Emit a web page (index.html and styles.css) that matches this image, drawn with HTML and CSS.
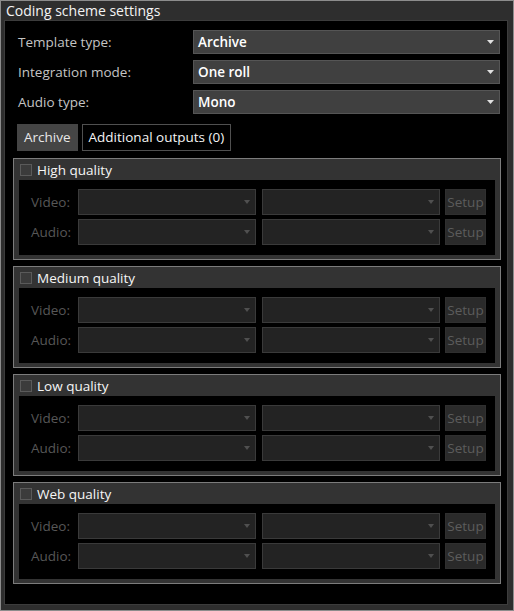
FILE: index.html
```html
<!DOCTYPE html>
<html>
<head>
<meta charset="utf-8">
<link rel="stylesheet" href="styles.css">
</head>
<body>
<div class="window">
  <div class="title">Coding scheme settings</div>
  <div class="panel">
    <div class="form">
      <div class="form-row">
        <span class="form-label">Template type:</span>
        <div class="combo"><span>Archive</span><svg class="arrow" width="7" height="4" viewBox="0 0 7 4"><path d="M0 0h7L3.5 4z"/></svg></div>
      </div>
      <div class="form-row">
        <span class="form-label">Integration mode:</span>
        <div class="combo"><span>One roll</span><svg class="arrow" width="7" height="4" viewBox="0 0 7 4"><path d="M0 0h7L3.5 4z"/></svg></div>
      </div>
      <div class="form-row">
        <span class="form-label">Audio type:</span>
        <div class="combo"><span>Mono</span><svg class="arrow" width="7" height="4" viewBox="0 0 7 4"><path d="M0 0h7L3.5 4z"/></svg></div>
      </div>
    </div>

    <div class="tabs">
      <div class="tab active">Archive</div>
      <div class="tab">Additional outputs (0)</div>
    </div>

    <div class="groups">
      <div class="group">
        <div class="group-head"><span class="check"></span><span>High quality</span></div>
        <div class="group-body">
          <div class="q-row"><span class="q-label">Video:</span><div class="dcombo"><svg class="darrow" width="6" height="4" viewBox="0 0 6 4"><path d="M0 0h6L3 4z"/></svg></div><div class="dcombo"><svg class="darrow" width="6" height="4" viewBox="0 0 6 4"><path d="M0 0h6L3 4z"/></svg></div><div class="setup">Setup</div></div>
          <div class="q-row"><span class="q-label">Audio:</span><div class="dcombo"><svg class="darrow" width="6" height="4" viewBox="0 0 6 4"><path d="M0 0h6L3 4z"/></svg></div><div class="dcombo"><svg class="darrow" width="6" height="4" viewBox="0 0 6 4"><path d="M0 0h6L3 4z"/></svg></div><div class="setup">Setup</div></div>
        </div>
      </div>
      <div class="group">
        <div class="group-head"><span class="check"></span><span>Medium quality</span></div>
        <div class="group-body">
          <div class="q-row"><span class="q-label">Video:</span><div class="dcombo"><svg class="darrow" width="6" height="4" viewBox="0 0 6 4"><path d="M0 0h6L3 4z"/></svg></div><div class="dcombo"><svg class="darrow" width="6" height="4" viewBox="0 0 6 4"><path d="M0 0h6L3 4z"/></svg></div><div class="setup">Setup</div></div>
          <div class="q-row"><span class="q-label">Audio:</span><div class="dcombo"><svg class="darrow" width="6" height="4" viewBox="0 0 6 4"><path d="M0 0h6L3 4z"/></svg></div><div class="dcombo"><svg class="darrow" width="6" height="4" viewBox="0 0 6 4"><path d="M0 0h6L3 4z"/></svg></div><div class="setup">Setup</div></div>
        </div>
      </div>
      <div class="group">
        <div class="group-head"><span class="check"></span><span>Low quality</span></div>
        <div class="group-body">
          <div class="q-row"><span class="q-label">Video:</span><div class="dcombo"><svg class="darrow" width="6" height="4" viewBox="0 0 6 4"><path d="M0 0h6L3 4z"/></svg></div><div class="dcombo"><svg class="darrow" width="6" height="4" viewBox="0 0 6 4"><path d="M0 0h6L3 4z"/></svg></div><div class="setup">Setup</div></div>
          <div class="q-row"><span class="q-label">Audio:</span><div class="dcombo"><svg class="darrow" width="6" height="4" viewBox="0 0 6 4"><path d="M0 0h6L3 4z"/></svg></div><div class="dcombo"><svg class="darrow" width="6" height="4" viewBox="0 0 6 4"><path d="M0 0h6L3 4z"/></svg></div><div class="setup">Setup</div></div>
        </div>
      </div>
      <div class="group">
        <div class="group-head"><span class="check"></span><span>Web quality</span></div>
        <div class="group-body">
          <div class="q-row"><span class="q-label">Video:</span><div class="dcombo"><svg class="darrow" width="6" height="4" viewBox="0 0 6 4"><path d="M0 0h6L3 4z"/></svg></div><div class="dcombo"><svg class="darrow" width="6" height="4" viewBox="0 0 6 4"><path d="M0 0h6L3 4z"/></svg></div><div class="setup">Setup</div></div>
          <div class="q-row"><span class="q-label">Audio:</span><div class="dcombo"><svg class="darrow" width="6" height="4" viewBox="0 0 6 4"><path d="M0 0h6L3 4z"/></svg></div><div class="dcombo"><svg class="darrow" width="6" height="4" viewBox="0 0 6 4"><path d="M0 0h6L3 4z"/></svg></div><div class="setup">Setup</div></div>
        </div>
      </div>
    </div>
  </div>
</div>
</body>
</html>
```

FILE: styles.css
```css
* { box-sizing: border-box; }
html, body { margin: 0; padding: 0; background: #2e2e2e; }
body {
  font-family: "Open Sans", "Liberation Sans", sans-serif;
  font-size: 13.5px;
}
.window {
  width: 514px;
  height: 611px;
  border: 1px solid #8c8c8c;
  background: #2e2e2e;
  display: flex;
  flex-direction: column;
  padding: 0 5px 5px 3px;
}
.title {
  height: 19px;
  line-height: 19px;
  color: #f4f4f4;
  padding-left: 2px;
  font-size: 14px;
  flex: none;
}
.panel {
  flex: 1;
  background: #000;
  border: 1px solid #3c3c3c;
  display: flex;
  flex-direction: column;
}
.form {
  display: flex;
  flex-direction: column;
  gap: 6px;
  padding: 9px 7px 0 13px;
}
.form-row {
  display: flex;
  align-items: center;
  height: 24px;
}
.form-label {
  width: 175px;
  color: #c4c4c4;
  font-size: 13.5px;
}
.combo {
  flex: 1;
  height: 24px;
  background: #404040;
  border: 1px solid #555;
  display: flex;
  align-items: center;
  justify-content: space-between;
  padding: 0 5px 0 4px;
  color: #fff;
  font-weight: 600;
  font-size: 13.5px;
}
.arrow { fill: #e0e0e0; }
.tabs {
  display: flex;
  gap: 4px;
  padding: 0 0 0 12px;
  margin-top: 10px;
}
.tab {
  height: 27px;
  line-height: 25px;
  padding: 0 6px;
  border: 1px solid #505050;
  color: #f4f4f4;
  background: #000;
  font-size: 13.5px;
}
.tab.active {
  background: #454545;
  border-color: #454545;
  color: #e8e8e8;
}
.groups {
  display: flex;
  flex-direction: column;
  gap: 6px;
  padding: 7px 6px 0 8px;
}
.group {
  height: 102px;
  border: 1px solid #7c7c7c;
  background: #333;
  display: flex;
  flex-direction: column;
  padding: 0 5px 4px 5px;
}
.group-head {
  height: 21px;
  display: flex;
  align-items: center;
  gap: 5px;
  color: #f6f6f6;
  font-size: 13.5px;
}
.check {
  width: 12px;
  height: 12px;
  border: 1px solid #5a5a5a;
  background: #3b3b3b;
  margin-left: 1px;
}
.group-body {
  flex: 1;
  background: #000;
  display: flex;
  flex-direction: column;
  gap: 4px;
  padding: 9px 0 0 12px;
}
.q-row {
  display: flex;
  align-items: center;
  height: 26px;
}
.q-label {
  width: 47px;
  color: #575757;
  font-size: 13.5px;
}
.dcombo {
  width: 178px;
  height: 26px;
  background: #232323;
  border: 1px solid #3a3a3a;
  margin-right: 6px;
  display: flex;
  align-items: center;
  justify-content: flex-end;
  padding-right: 5px;
}
.dcombo + .dcombo { margin-right: 5px; }
.darrow { fill: #505050; }
.setup {
  width: 41px;
  height: 26px;
  background: #2a2a2a;
  border: 1px solid #2f2f2f;
  color: #5c5c5c;
  font-size: 13.5px;
  text-align: center;
  line-height: 24px;
}
```
